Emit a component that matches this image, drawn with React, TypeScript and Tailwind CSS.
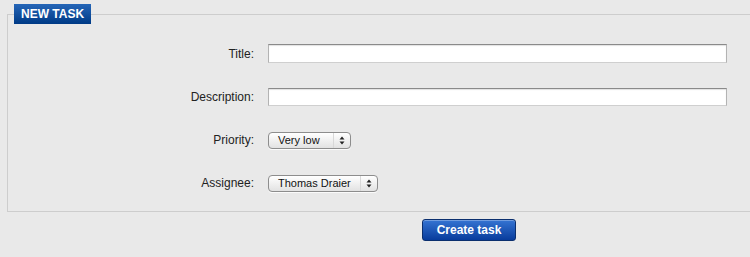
import { useState } from "react";

const font = { fontFamily: '"Liberation Sans", Arial, sans-serif' };

function SelectBox({ value, width }: { value: string; width: string }) {
  return (
    <div
      className={`flex h-[17px] items-center justify-between rounded-[4px] border border-[#8d8d8d] bg-gradient-to-b from-white to-[#e2e2e2] pl-[9px] pr-[5px] text-[11px] text-[#111] shadow-[0_1px_0_rgba(255,255,255,0.8)] ${width}`}
    >
      <span className="font-medium">{value}</span>
      <span className="flex h-full items-center border-l border-[#d8d8d8] pl-[5px]">
        <svg width="6" height="9" viewBox="0 0 6 9" aria-hidden="true">
          <path d="M3 0.5 L5.5 3.5 H0.5 Z" fill="#222" />
          <path d="M3 8.5 L5.5 5.5 H0.5 Z" fill="#222" />
        </svg>
      </span>
    </div>
  );
}

function TextField({ height }: { height: string }) {
  const [value, setValue] = useState("");
  return (
    <input
      type="text"
      value={value}
      onChange={(event) => setValue(event.target.value)}
      className={`w-[459px] border border-[#b3b3b3] border-t-[#8a8a8a] border-b-[#cfcfcf] bg-white px-1 text-[12px] shadow-[inset_0_1px_1px_rgba(0,0,0,0.12)] outline-none ${height}`}
    />
  );
}

export default function App() {
  return (
    <div className="h-[257px] w-[750px] overflow-hidden bg-[#e9e9e9]" style={font}>
      <fieldset className="ml-[7px] mt-[4px] w-[760px] border border-[#cdcdcd] pb-[19px] pl-[6px] pt-[20px]">
        <legend className="h-[20px] bg-gradient-to-b from-[#2566b8] to-[#003a86] px-[7px] text-[12px] font-bold leading-[20px] text-white">
          NEW TASK
        </legend>

        <div className="grid grid-cols-[240px_1fr] items-center gap-x-[14px] gap-y-[25px] text-[12px] text-[#222]">
          <label className="text-right">Title:</label>
          <TextField height="h-[19px]" />

          <label className="text-right">Description:</label>
          <TextField height="h-[18px]" />

          <label className="text-right">Priority:</label>
          <SelectBox value="Very low" width="w-[83px]" />

          <label className="text-right">Assignee:</label>
          <SelectBox value="Thomas Draier" width="w-[110px]" />
        </div>
      </fieldset>

      <div className="mt-[5px] pl-[422px]">
        <button
          type="button"
          className="h-[22px] w-[94px] rounded-[3px] border border-[#0b2f6e] bg-gradient-to-b from-[#3574d3] to-[#083c9c] text-[12px] font-bold text-white shadow-[inset_0_1px_0_rgba(255,255,255,0.3)]"
        >
          Create task
        </button>
      </div>
    </div>
  );
}
